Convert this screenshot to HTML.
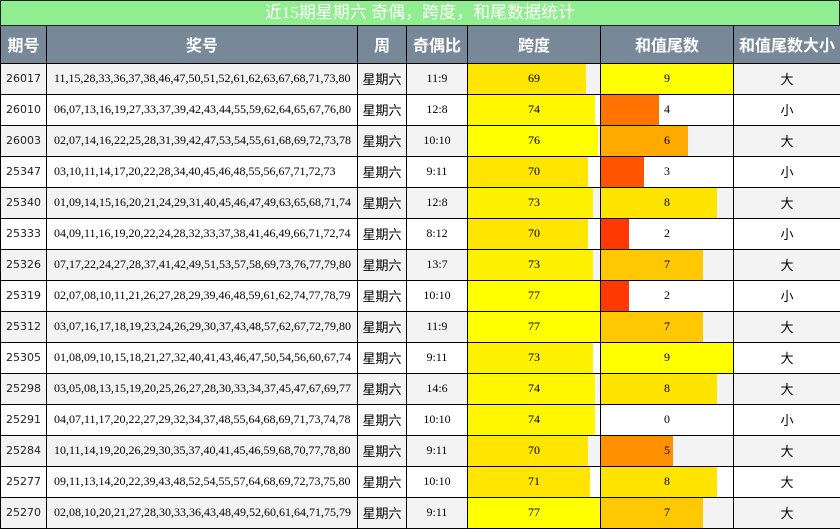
<!DOCTYPE html>
<html><head><meta charset="utf-8"><style>
*{box-sizing:border-box;margin:0;padding:0}
body{width:840px;height:529px;overflow:hidden;background:#fff;font-family:"Liberation Sans","Noto Sans CJK SC",sans-serif}
.title{height:26px;background:#90ee90;border:1px solid #222;color:#fff;font-size:17px;text-align:center;line-height:24px;font-family:"Liberation Serif","Noto Sans CJK SC",serif}
table{border-collapse:collapse;table-layout:fixed;width:840px}
td,th{border:1px solid #000;text-align:center;height:31px;font-size:12px;padding:0;position:relative;overflow:hidden}
td:first-child{font-family:"DejaVu Sans",sans-serif;font-size:11px;color:#222}
th{height:37px;background:#778899;color:#fff;font-size:16px;font-weight:bold;border-top:0}
tr:nth-child(even) td{background:#f3f3f3}
.s{font-family:"Liberation Serif","Noto Sans CJK SC",serif;font-size:12px}
td.s.n{text-align:left;padding-left:7px}
.c{font-size:13px}
.b{position:absolute;left:0;top:0;bottom:0}
.t{position:relative;font-family:"Liberation Serif",serif;font-size:12px}
</style></head><body>
<div class="title">近15期星期六 奇偶，跨度，和尾数据统计</div>
<table>
<colgroup><col style="width:46px"><col style="width:311px"><col style="width:49px"><col style="width:61px"><col style="width:133px"><col style="width:133px"><col style="width:107px"></colgroup>
<tr><th>期号</th><th>奖号</th><th>周</th><th>奇偶比</th><th>跨度</th><th>和值尾数</th><th>和值尾数大小</th></tr>
<tr><td>26017</td><td class="s n">11,15,28,33,36,37,38,46,47,50,51,52,61,62,63,67,68,71,73,80</td><td class="c">星期六</td><td class="s">11:9</td><td><div class="b" style="width:118px;background:#ffe500"></div><span class="t">69</span></td><td><div class="b" style="width:133px;background:#ffff00"></div><span class="t">9</span></td><td class="c">大</td></tr>
<tr><td>26010</td><td class="s n">06,07,13,16,19,27,33,37,39,42,43,44,55,59,62,64,65,67,76,80</td><td class="c">星期六</td><td class="s">12:8</td><td><div class="b" style="width:127px;background:#fff700"></div><span class="t">74</span></td><td><div class="b" style="width:58px;background:#ff7300"></div><span class="t">4</span></td><td class="c">小</td></tr>
<tr><td>26003</td><td class="s n">02,07,14,16,22,25,28,31,39,42,47,53,54,55,61,68,69,72,73,78</td><td class="c">星期六</td><td class="s">10:10</td><td><div class="b" style="width:130px;background:#ffff00"></div><span class="t">76</span></td><td><div class="b" style="width:87px;background:#ffaa00"></div><span class="t">6</span></td><td class="c">大</td></tr>
<tr><td>25347</td><td class="s n">03,10,11,14,17,20,22,28,34,40,45,46,48,55,56,67,71,72,73</td><td class="c">星期六</td><td class="s">9:11</td><td><div class="b" style="width:120px;background:#ffe500"></div><span class="t">70</span></td><td><div class="b" style="width:43px;background:#ff5500"></div><span class="t">3</span></td><td class="c">小</td></tr>
<tr><td>25340</td><td class="s n">01,09,14,15,16,20,21,24,29,31,40,45,46,47,49,63,65,68,71,74</td><td class="c">星期六</td><td class="s">12:8</td><td><div class="b" style="width:125px;background:#fff200"></div><span class="t">73</span></td><td><div class="b" style="width:116px;background:#ffe400"></div><span class="t">8</span></td><td class="c">大</td></tr>
<tr><td>25333</td><td class="s n">04,09,11,16,19,20,22,24,28,32,33,37,38,41,46,49,66,71,72,74</td><td class="c">星期六</td><td class="s">8:12</td><td><div class="b" style="width:120px;background:#ffe500"></div><span class="t">70</span></td><td><div class="b" style="width:28px;background:#ff3a00"></div><span class="t">2</span></td><td class="c">小</td></tr>
<tr><td>25326</td><td class="s n">07,17,22,24,27,28,37,41,42,49,51,53,57,58,69,73,76,77,79,80</td><td class="c">星期六</td><td class="s">13:7</td><td><div class="b" style="width:125px;background:#fff200"></div><span class="t">73</span></td><td><div class="b" style="width:102px;background:#ffc800"></div><span class="t">7</span></td><td class="c">大</td></tr>
<tr><td>25319</td><td class="s n">02,07,08,10,11,21,26,27,28,29,39,46,48,59,61,62,74,77,78,79</td><td class="c">星期六</td><td class="s">10:10</td><td><div class="b" style="width:133px;background:#ffff00"></div><span class="t">77</span></td><td><div class="b" style="width:28px;background:#ff3a00"></div><span class="t">2</span></td><td class="c">小</td></tr>
<tr><td>25312</td><td class="s n">03,07,16,17,18,19,23,24,26,29,30,37,43,48,57,62,67,72,79,80</td><td class="c">星期六</td><td class="s">11:9</td><td><div class="b" style="width:133px;background:#ffff00"></div><span class="t">77</span></td><td><div class="b" style="width:102px;background:#ffc800"></div><span class="t">7</span></td><td class="c">大</td></tr>
<tr><td>25305</td><td class="s n">01,08,09,10,15,18,21,27,32,40,41,43,46,47,50,54,56,60,67,74</td><td class="c">星期六</td><td class="s">9:11</td><td><div class="b" style="width:125px;background:#fff200"></div><span class="t">73</span></td><td><div class="b" style="width:133px;background:#ffff00"></div><span class="t">9</span></td><td class="c">大</td></tr>
<tr><td>25298</td><td class="s n">03,05,08,13,15,19,20,25,26,27,28,30,33,34,37,45,47,67,69,77</td><td class="c">星期六</td><td class="s">14:6</td><td><div class="b" style="width:127px;background:#fff700"></div><span class="t">74</span></td><td><div class="b" style="width:116px;background:#ffe400"></div><span class="t">8</span></td><td class="c">大</td></tr>
<tr><td>25291</td><td class="s n">04,07,11,17,20,22,27,29,32,34,37,48,55,64,68,69,71,73,74,78</td><td class="c">星期六</td><td class="s">10:10</td><td><div class="b" style="width:127px;background:#fff700"></div><span class="t">74</span></td><td><span class="t">0</span></td><td class="c">小</td></tr>
<tr><td>25284</td><td class="s n">10,11,14,19,20,26,29,30,35,37,40,41,45,46,59,68,70,77,78,80</td><td class="c">星期六</td><td class="s">9:11</td><td><div class="b" style="width:120px;background:#ffe500"></div><span class="t">70</span></td><td><div class="b" style="width:72px;background:#ff9100"></div><span class="t">5</span></td><td class="c">大</td></tr>
<tr><td>25277</td><td class="s n">09,11,13,14,20,22,39,43,48,52,54,55,57,64,68,69,72,73,75,80</td><td class="c">星期六</td><td class="s">10:10</td><td><div class="b" style="width:122px;background:#ffe500"></div><span class="t">71</span></td><td><div class="b" style="width:116px;background:#ffe400"></div><span class="t">8</span></td><td class="c">大</td></tr>
<tr><td>25270</td><td class="s n">02,08,10,20,21,27,28,30,33,36,43,48,49,52,60,61,64,71,75,79</td><td class="c">星期六</td><td class="s">9:11</td><td><div class="b" style="width:133px;background:#ffff00"></div><span class="t">77</span></td><td><div class="b" style="width:102px;background:#ffc800"></div><span class="t">7</span></td><td class="c">大</td></tr>
</table>
</body></html>
